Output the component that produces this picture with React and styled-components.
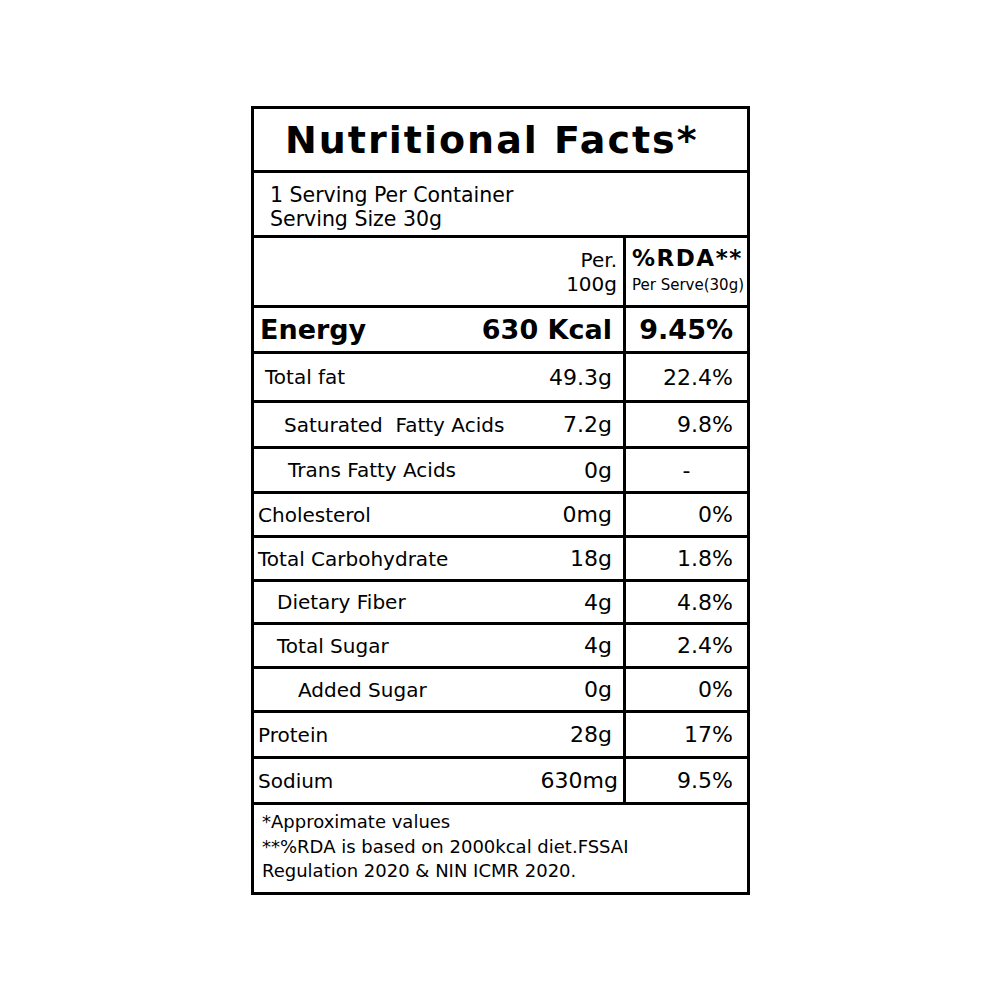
import React from "react";
import styled, { createGlobalStyle } from "styled-components";

const Global = createGlobalStyle`
  html, body { margin: 0; padding: 0; background: #fff; }
  body { font-family: "DejaVu Sans", "Liberation Sans", sans-serif; color: #000; }
`;

const Page = styled.div`
  width: 1001px;
  height: 1001px;
  display: flex;
  align-items: center;
  justify-content: center;
`;

const Label = styled.div`
  box-sizing: border-box;
  width: 499px;
  height: 789px;
  border: 3px solid #000;
  display: flex;
  flex-direction: column;
`;

const TitleRow = styled.div`
  height: 61px;
  display: flex;
  align-items: center;
  padding-left: 31px;
  font-family: "DejaVu Sans", sans-serif;
  font-weight: 700;
  font-size: 38px;
  letter-spacing: 2px;
`;

const ServingRow = styled.div`
  box-sizing: border-box;
  height: 65px;
  border-top: 3px solid #000;
  padding: 10px 0 0 16px;
  font-size: 20.5px;
  line-height: 24px;
`;

const Row = styled.div`
  box-sizing: border-box;
  height: ${(p) => p.$h}px;
  border-top: 3px solid #000;
  display: grid;
  grid-template-columns: 369px 124px;
`;

const LabelCell = styled.div`
  display: flex;
  align-items: center;
  justify-content: space-between;
  padding-left: ${(p) => p.$indent}px;
  padding-right: ${(p) => (p.$tight ? 5 : 11)}px;
  white-space: pre;
`;

const Name = styled.span`
  font-size: ${(p) => (p.$bold ? 27 : 20)}px;
  font-weight: ${(p) => (p.$bold ? 700 : 400)};
`;

const Amount = styled.span`
  font-size: ${(p) => (p.$bold ? 27 : 22)}px;
  font-weight: ${(p) => (p.$bold ? 700 : 400)};
`;

const PctCell = styled.div`
  box-sizing: border-box;
  border-left: 3px solid #000;
  display: flex;
  align-items: center;
  justify-content: ${(p) => (p.$center ? "center" : "flex-end")};
  padding-right: ${(p) => (p.$center ? 0 : 14)}px;
  font-size: ${(p) => (p.$bold ? 27 : 22)}px;
  font-weight: ${(p) => (p.$bold ? 700 : 400)};
`;

const HeadLeft = styled.div`
  display: flex;
  flex-direction: column;
  align-items: flex-end;
  justify-content: center;
  padding-right: 6px;
  font-size: 20px;
  line-height: 24px;
`;

const HeadRight = styled.div`
  box-sizing: border-box;
  border-left: 3px solid #000;
  display: flex;
  flex-direction: column;
  justify-content: center;
  padding-left: 6px;
  padding-bottom: 4px;
`;

const RdaTitle = styled.span`
  font-size: 23px;
  font-weight: 700;
  letter-spacing: 1.5px;
  line-height: 26px;
  white-space: nowrap;
`;

const RdaSub = styled.span`
  margin-top: 4px;
  font-size: 15px;
  line-height: 20px;
  white-space: nowrap;
`;

const Footer = styled.div`
  box-sizing: border-box;
  flex: 1;
  border-top: 3px solid #000;
  padding: 5px 0 0 8px;
  font-size: 18px;
  line-height: 24.5px;
`;

const rows = [
  { name: "Energy", amt: "630 Kcal", pct: "9.45%", h: 46, indent: 6, bold: true },
  { name: "Total fat", amt: "49.3g", pct: "22.4%", h: 49, indent: 11 },
  { name: "Saturated  Fatty Acids", amt: "7.2g", pct: "9.8%", h: 46, indent: 30 },
  { name: "Trans Fatty Acids", amt: "0g", pct: "-", h: 45, indent: 34, center: true },
  { name: "Cholesterol", amt: "0mg", pct: "0%", h: 44, indent: 4 },
  { name: "Total Carbohydrate", amt: "18g", pct: "1.8%", h: 44, indent: 4 },
  { name: "Dietary Fiber", amt: "4g", pct: "4.8%", h: 43, indent: 23 },
  { name: "Total Sugar", amt: "4g", pct: "2.4%", h: 44, indent: 23 },
  { name: "Added Sugar", amt: "0g", pct: "0%", h: 44, indent: 44 },
  { name: "Protein", amt: "28g", pct: "17%", h: 46, indent: 4 },
  { name: "Sodium", amt: "630mg", pct: "9.5%", h: 46, indent: 4, tight: true },
];

export default function App() {
  return (
    <>
      <Global />
      <Page>
        <Label>
          <TitleRow>Nutritional Facts*</TitleRow>
          <ServingRow>
            <div>1 Serving Per Container</div>
            <div>Serving Size 30g</div>
          </ServingRow>
          <Row $h={70}>
            <HeadLeft>
              <span>Per.</span>
              <span>100g</span>
            </HeadLeft>
            <HeadRight>
              <RdaTitle>%RDA**</RdaTitle>
              <RdaSub>Per Serve(30g)</RdaSub>
            </HeadRight>
          </Row>
          {rows.map((r) => (
            <Row key={r.name} $h={r.h}>
              <LabelCell $indent={r.indent} $tight={r.tight}>
                <Name $bold={r.bold}>{r.name}</Name>
                <Amount $bold={r.bold}>{r.amt}</Amount>
              </LabelCell>
              <PctCell $bold={r.bold} $center={r.center}>
                {r.pct}
              </PctCell>
            </Row>
          ))}
          <Footer>
            <div>*Approximate values</div>
            <div>**%RDA is based on 2000kcal diet.FSSAI</div>
            <div>Regulation 2020 &amp; NIN ICMR 2020.</div>
          </Footer>
        </Label>
      </Page>
    </>
  );
}
